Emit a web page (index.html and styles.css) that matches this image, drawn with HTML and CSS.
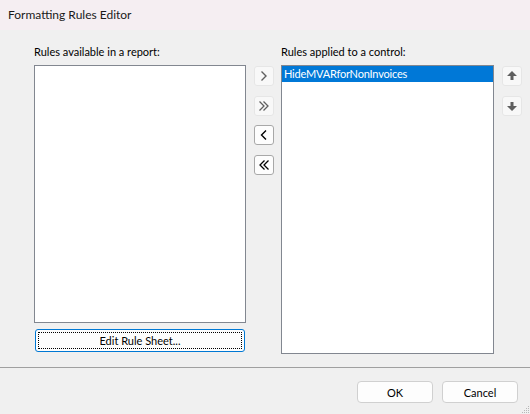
FILE: index.html
```html
<!DOCTYPE html>
<html>
<head>
<meta charset="utf-8">
<link rel="stylesheet" href="styles.css">
</head>
<body>
<div class="window">
  <div class="titlebar">Formatting Rules Editor</div>
  <div class="main">
    <div class="col col-left">
      <div class="label">Rules available in a report:</div>
      <div class="list list-left"></div>
      <button class="btn-edit"><span class="focus">Edit Rule Sheet...</span></button>
    </div>
    <div class="movebtns">
      <div class="ibtn disabled m1">
        <svg width="20" height="20" viewBox="0 0 20 20"><path d="M7.5 5.5 L12 10 L7.5 14.5" fill="none" stroke="#5f5f5f" stroke-width="1.4"/></svg>
      </div>
      <div class="ibtn disabled m2">
        <svg width="20" height="20" viewBox="0 0 20 20"><path d="M5.5 5.5 L10 10 L5.5 14.5 M9.5 5.5 L14 10 L9.5 14.5" fill="none" stroke="#5f5f5f" stroke-width="1.3"/></svg>
      </div>
      <div class="ibtn m3">
        <svg width="20" height="20" viewBox="0 0 20 20"><path d="M12 5.5 L7.5 10 L12 14.5" fill="none" stroke="#000" stroke-width="1.4"/></svg>
      </div>
      <div class="ibtn m4">
        <svg width="20" height="20" viewBox="0 0 20 20"><path d="M10.5 5.5 L6 10 L10.5 14.5 M14.5 5.5 L10 10 L14.5 14.5" fill="none" stroke="#000" stroke-width="1.3"/></svg>
      </div>
    </div>
    <div class="col col-right">
      <div class="label">Rules applied to a control:</div>
      <div class="list list-right">
        <div class="item selected">HideMVARforNonInvoices</div>
      </div>
    </div>
    <div class="orderbtns">
      <div class="ibtn disabled">
        <svg width="20" height="20" viewBox="0 0 20 20"><path d="M10 5 L15 10 L11.5 10 L11.5 14 L8.5 14 L8.5 10 L5 10 Z" fill="#5f5f5f"/></svg>
      </div>
      <div class="ibtn disabled o2">
        <svg width="20" height="20" viewBox="0 0 20 20"><path d="M10 15 L15 10 L11.5 10 L11.5 6 L8.5 6 L8.5 10 L5 10 Z" fill="#5f5f5f"/></svg>
      </div>
    </div>
  </div>
  <div class="footer">
    <button class="btn">OK</button>
    <button class="btn">Cancel</button>
  </div>
  <svg class="grip" width="10" height="10" viewBox="0 0 10 10">
    <rect x="8" y="2" width="1" height="1" fill="#b8b8b8"/>
    <rect x="6" y="4" width="1" height="1" fill="#b8b8b8"/>
    <rect x="8" y="4" width="1" height="1" fill="#b8b8b8"/>
    <rect x="4" y="6" width="1" height="1" fill="#b8b8b8"/>
    <rect x="6" y="6" width="1" height="1" fill="#b8b8b8"/>
    <rect x="8" y="6" width="1" height="1" fill="#b8b8b8"/>
    <rect x="2" y="8" width="1" height="1" fill="#b8b8b8"/>
    <rect x="4" y="8" width="1" height="1" fill="#b8b8b8"/>
    <rect x="6" y="8" width="1" height="1" fill="#b8b8b8"/>
    <rect x="8" y="8" width="1" height="1" fill="#b8b8b8"/>
  </svg>
</div>
</body>
</html>
```

FILE: styles.css
```css
* { box-sizing: border-box; }
html, body { margin: 0; padding: 0; }
body {
  width: 530px;
  height: 414px;
  overflow: hidden;
  background: #f0f0f0;
  font-family: "Lato", "Noto Sans", sans-serif;
  font-size: 11px;
  color: #000;
}
.window {
  position: relative;
  width: 530px;
  height: 414px;
  display: flex;
  flex-direction: column;
}
.titlebar {
  height: 30px;
  background: #f5eef2;
  padding-left: 8px;
  line-height: 30px;
  font-size: 12px;
  color: #1a1a1a;
}
.main {
  height: 338px;
  display: flex;
  align-items: flex-start;
  padding: 14px 0 0 34px;
  border-bottom: 1px solid #a0a0a0;
}
.col { display: flex; flex-direction: column; }
.col-left { width: 212px; }
.col-right { width: 213px; margin-left: 7px; }
.label {
  height: 15px;
  line-height: 15px;
  margin-bottom: 6px;
  white-space: nowrap;
}
.list {
  background: #fff;
  border: 1px solid #828790;
  padding: 0;
}
.list-left { height: 258px; }
.list-right { height: 289px; }
.item {
  height: 16px;
  line-height: 16px;
  padding-left: 2px;
  white-space: nowrap;
  letter-spacing: -0.2px;
}
.item.selected { background: #0078d7; color: #fff; }
.btn-edit {
  margin-top: 6px;
  height: 23px;
  width: 210px;
  margin-left: 1px;
  padding: 2px;
  background: #fdfdfd;
  border: 1px solid #0078d4;
  border-radius: 3px;
  font: inherit;
  color: #000;
  display: flex;
}
.btn-edit .focus {
  flex: 1;
  border: 1px dotted #000;
  display: flex;
  align-items: center;
  justify-content: center;
  line-height: 15px;
}
.movebtns {
  margin-left: 8px;
  margin-top: 22px;
  display: flex;
  flex-direction: column;
}
.orderbtns {
  margin-left: 8px;
  margin-top: 22px;
  display: flex;
  flex-direction: column;
}
.ibtn {
  width: 20px;
  height: 20px;
  border: 1px solid #a8a8a8;
  border-radius: 3px;
  background: #fdfdfd;
  display: flex;
  align-items: center;
  justify-content: center;
}
.ibtn svg { display: block; flex: none; margin: -1px; }
.ibtn.disabled { border-color: #e6e6e6; background: #f8f8f8; }
.m2 { margin-top: 10px; }
.m3 { margin-top: 9px; }
.m4 { margin-top: 10px; }
.o2 { margin-top: 10px; }
.footer {
  flex: 1;
  display: flex;
  justify-content: flex-end;
  align-items: flex-start;
  padding: 13px 12px 0 0;
  gap: 9px;
}
.btn {
  width: 76px;
  height: 22px;
  background: #fdfdfd;
  border: 1px solid #d0d0d0;
  border-radius: 4px;
  font: inherit;
  color: #000;
  padding: 0;
}
.grip { position: absolute; right: 0; bottom: 0; }
```
